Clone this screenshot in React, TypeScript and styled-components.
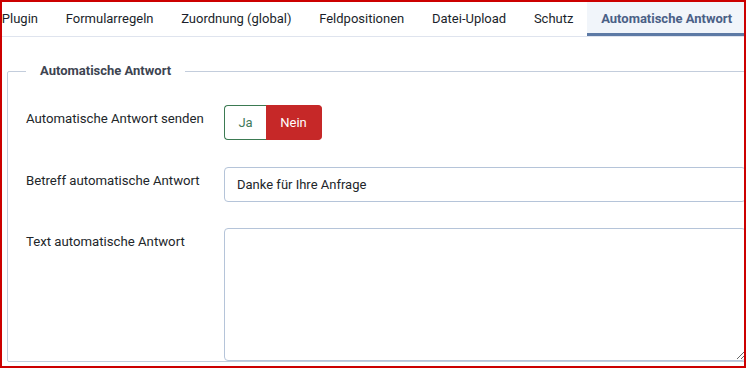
import React from "react";
import styled, { createGlobalStyle } from "styled-components";

const Global = createGlobalStyle`
  html, body { margin: 0; padding: 0; background: #fff; overflow: hidden; }
  * { box-sizing: border-box; }
  body { font-family: Roboto, "Liberation Sans", Arial, sans-serif; color: #22262a; }
`;

const Frame = styled.div`
  width: 746px;
  height: 368px;
  border: 2px solid #cc0000;
  overflow: hidden;
  background: #fff;
`;

const TabBar = styled.div`
  display: flex;
  margin-left: -14px;
  border-bottom: 1px solid #dfe4ee;
  height: 35px;
`;

const Tab = styled.div<{ $active?: boolean }>`
  display: flex;
  align-items: center;
  padding: 0 13.85px 2px;
  height: 34px;
  font-size: 13px;
  white-space: nowrap;
  color: ${(p) => (p.$active ? "#4a6086" : "#1b1f2b")};
  font-weight: ${(p) => (p.$active ? 700 : 400)};
  background: ${(p) => (p.$active ? "#f1f5fa" : "transparent")};
  box-shadow: ${(p) => (p.$active ? "inset 0 -3px 0 #5d7aa5" : "none")};
  flex-shrink: 0;
`;

const Fieldset = styled.fieldset`
  margin: 24px -40px 0 5px;
  padding: 24px 0 0 18px;
  border: 1px solid #c3cddc;
  border-radius: 2px;
  min-width: 0;
`;

const Legend = styled.legend`
  padding: 0 14px;
  font-size: 13px;
  line-height: 20px;
  font-weight: 700;
  color: #3d4451;
`;

const FormGrid = styled.div`
  display: grid;
  grid-template-columns: 198px 1fr;
  row-gap: 26.5px;
`;

const Label = styled.label`
  font-size: 13.2px;
  line-height: 19px;
  padding-top: 4px;
  color: #22262a;
`;

const Toggle = styled.div`
  display: flex;
  height: 35px;
  width: 98px;
`;

const ToggleOption = styled.span<{ $on?: boolean; $pos: "left" | "right" }>`
  display: flex;
  align-items: center;
  justify-content: center;
  font-size: 13px;
  border: 1px solid ${(p) => (p.$on ? "#c52828" : "#3b7a52")};
  background: ${(p) => (p.$on ? "#c62828" : "#fff")};
  color: ${(p) => (p.$on ? "#fff" : "#3f7a5a")};
  width: ${(p) => (p.$pos === "left" ? "42px" : "56px")};
  border-radius: ${(p) => (p.$pos === "left" ? "4px 0 0 4px" : "0 4px 4px 0")};
  ${(p) => (p.$pos === "left" ? "border-right: none;" : "border-left: none;")}
`;

const TextInput = styled.input`
  height: 35px;
  width: 100%;
  border: 1px solid #b5c4d9;
  border-radius: 4px;
  padding: 0 12px;
  font-family: Roboto, "Liberation Sans", Arial, sans-serif;
  font-size: 13px;
  color: #22262a;
  outline: none;
`;

const TextArea = styled.textarea`
  height: 133px;
  width: 100%;
  border: 1px solid #b5c4d9;
  border-radius: 4px;
  padding: 8px 12px;
  font-family: Roboto, "Liberation Sans", Arial, sans-serif;
  font-size: 13px;
  resize: both;
  outline: none;
  display: block;
`;

const ControlWrap = styled.div`
  margin-right: 37px;
`;

const tabs = [
  "Plugin",
  "Formularregeln",
  "Zuordnung (global)",
  "Feldpositionen",
  "Datei-Upload",
  "Schutz",
  "Automatische Antwort",
];

export default function App() {
  return (
    <>
      <Global />
      <Frame>
        <TabBar>
          {tabs.map((t, i) => (
            <Tab key={t} $active={i === tabs.length - 1}>
              {t}
            </Tab>
          ))}
        </TabBar>
        <Fieldset>
          <Legend>Automatische Antwort</Legend>
          <FormGrid>
            <Label>Automatische Antwort senden</Label>
            <Toggle>
              <ToggleOption $pos="left">Ja</ToggleOption>
              <ToggleOption $pos="right" $on>
                Nein
              </ToggleOption>
            </Toggle>
            <Label>Betreff automatische Antwort</Label>
            <ControlWrap>
              <TextInput defaultValue="Danke für Ihre Anfrage" />
            </ControlWrap>
            <Label>Text automatische Antwort</Label>
            <ControlWrap>
              <TextArea />
            </ControlWrap>
          </FormGrid>
        </Fieldset>
      </Frame>
    </>
  );
}
